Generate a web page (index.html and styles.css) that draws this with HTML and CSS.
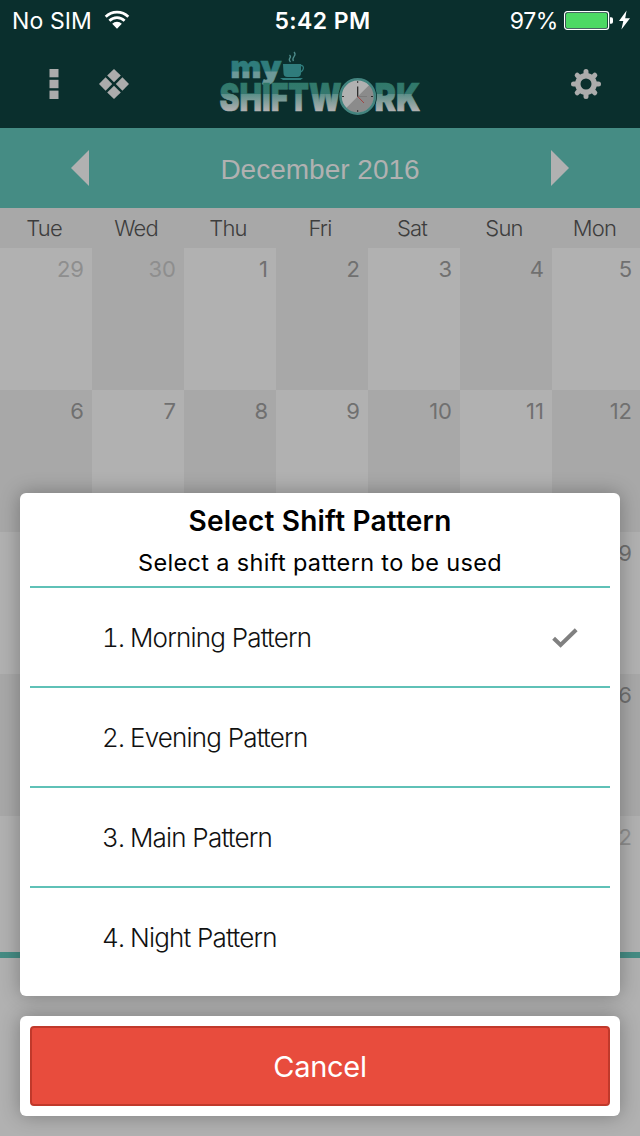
FILE: index.html
```html
<!DOCTYPE html>
<html lang="en">
<head>
  <meta charset="UTF-8">
  <meta name="viewport" content="width=device-width, initial-scale=1.0">
  <title>My Shiftwork</title>
  <link rel="stylesheet" href="styles.css">
</head>
<body>
  <div class="screen">
    <header class="header">
      <div class="status-bar">
        <div class="status-left">
          <span class="carrier">No SIM</span>
          <svg class="wifi" width="26" height="20" viewBox="0 0 26 20">
            <g fill="none" stroke="#fff" stroke-width="2.7">
              <path d="M1.7 6.8 A16 16 0 0 1 24.3 6.8"/>
              <path d="M5.4 10.8 A10.8 10.8 0 0 1 20.6 10.8"/>
            </g>
            <path d="M8.2 13.8 A6.8 6.8 0 0 1 17.8 13.8 L13 18.8 Z" fill="#fff"/>
          </svg>
        </div>
        <span class="time">5:42 PM</span>
        <div class="status-right">
          <span class="percent">97%</span>
          <svg width="67" height="20" viewBox="0 0 67 20">
            <rect x="0.6" y="1.6" width="44" height="17.8" rx="2.6" fill="none" stroke="#fff" stroke-width="1.2"/>
            <rect x="2" y="3" width="41.2" height="15" rx="1.6" fill="#4cd964"/>
            <path d="M46 7.3 h1.2 a1.8 1.8 0 0 1 1.8 1.8 v2.8 a1.8 1.8 0 0 1 -1.8 1.8 h-1.2 Z" fill="#fff"/>
            <path d="M62.6 0.6 L55 11 H59.3 L57.4 19.4 L66 8.3 H61.2 Z" fill="#fff"/>
          </svg>
        </div>
      </div>
      <div class="toolbar">
        <svg class="icon-dots" width="10" height="30" viewBox="0 0 10 30" fill="#acacac">
          <rect x="0.5" y="0" width="9" height="8.3"/>
          <rect x="0.5" y="10.8" width="9" height="8.4"/>
          <rect x="0.5" y="21.6" width="9" height="8.4"/>
        </svg>
        <svg class="icon-tiles" width="30" height="30" viewBox="0 0 30 30" fill="#acacac">
          <path d="M15 0 L21.8 6.6 L15 13.2 L8.2 6.6 Z"/>
          <path d="M6.6 8.2 L13.2 15 L6.6 21.8 L0 15 Z"/>
          <path d="M23.4 8.2 L30 15 L23.4 21.8 L16.8 15 Z"/>
          <path d="M15 16.8 L21.8 23.4 L15 30 L8.2 23.4 Z"/>
        </svg>
        <svg class="logo" width="210" height="68" viewBox="0 0 210 68" role="img" aria-label="my Shiftwork">
          <defs>
            <linearGradient id="word" gradientUnits="userSpaceOnUse" x1="0" y1="32" x2="0" y2="61">
              <stop offset="0" stop-color="#2f7969"/>
              <stop offset="0.4" stop-color="#35786f"/>
              <stop offset="0.42" stop-color="#5c8f89"/>
              <stop offset="1" stop-color="#b0b0b0"/>
            </linearGradient>
            <linearGradient id="my" gradientUnits="userSpaceOnUse" x1="0" y1="10" x2="0" y2="33">
              <stop offset="0" stop-color="#2f7c7c"/>
              <stop offset="0.48" stop-color="#2f7c7c"/>
              <stop offset="0.52" stop-color="#6c9998"/>
              <stop offset="1" stop-color="#6c9998"/>
            </linearGradient>
          </defs>
          <g class="logo-text">
            <text x="15.5" y="27.5" font-size="31" textLength="51" lengthAdjust="spacingAndGlyphs" fill="url(#my)" stroke="url(#my)">my</text>
            <text x="4.5" y="60.7" font-size="39" textLength="122" lengthAdjust="spacingAndGlyphs" fill="url(#word)" stroke="url(#word)">SHIFTW</text>
            <text x="159.5" y="60.7" font-size="39" textLength="46" lengthAdjust="spacingAndGlyphs" fill="url(#word)" stroke="url(#word)">RK</text>
          </g>
          <!-- coffee cup -->
          <g fill="#2f7c7c">
            <path d="M68 14 H86 V23 Q86 27 82 27 H72.5 Q68.5 27 68.5 23 Z"/>
            <path d="M65 28 H88 L85.5 30 H68 Z"/>
            <path d="M85.5 15.5 H87 Q89.6 17 87.5 20.5 L85 22.5" fill="none" stroke="#2f7c7c" stroke-width="1.3"/>
            <path d="M75.5 12 C71.5 8 78 8 74.5 5 M78.5 11 C75.5 7 83 6 79 2" fill="none" stroke="#4d8c8b" stroke-width="1.3"/>
          </g>
          <!-- clock in place of the O -->
          <circle cx="142.7" cy="46.5" r="18" fill="#b1b1b1" stroke="#0a2f2d" stroke-width="2.5"/>
          <path d="M154.7 34.5 A17 17 0 0 1 130.7 58.5 Z" fill="#8b8b8b"/>
          <circle cx="142.7" cy="46.5" r="17.2" fill="none" stroke="#43847f" stroke-width="2.6"/>
          <path d="M142.7 31 V33 M142.7 60 V62 M127 46.5 H129 M156 46.5 H158" stroke="#222" stroke-width="0.9"/>
          <path d="M142.7 47 V36.5" stroke="#222" stroke-width="1.2"/>
          <path d="M142.7 46.5 H152" stroke="#777" stroke-width="0.8"/>
          <path d="M142.7 46.5 L149 53" stroke="#a33c3c" stroke-width="0.9"/>
        </svg>
        <svg class="icon-gear" width="30" height="30" viewBox="-15 -15 30 30">
          <circle r="8.2" fill="none" stroke="#acacac" stroke-width="5.4"/>
          <g stroke="#acacac" stroke-width="5" stroke-linecap="round">
            <path d="M0 -9.5 V-12.5 M0 9.5 V12.5 M-9.5 0 H-12.5 M9.5 0 H12.5"/>
            <path d="M-6.8 -6.8 L-8.8 -8.8 M6.8 -6.8 L8.8 -8.8 M-6.8 6.8 L-8.8 8.8 M6.8 6.8 L8.8 8.8"/>
          </g>
        </svg>
      </div>
    </header>

    <div class="month-bar">
      <svg width="18" height="36" viewBox="0 0 18 36"><path d="M18 0 V36 L0 18 Z" fill="#b1b1b1"/></svg>
      <span class="month">December 2016</span>
      <svg width="18" height="36" viewBox="0 0 18 36"><path d="M0 0 V36 L18 18 Z" fill="#b1b1b1"/></svg>
    </div>

    <div class="weekdays">
      <span>Tue</span><span>Wed</span><span>Thu</span><span>Fri</span><span>Sat</span><span>Sun</span><span>Mon</span>
    </div>

    <div class="calendar">
      <div class="day other">29</div><div class="day other">30</div><div class="day">1</div><div class="day">2</div><div class="day">3</div><div class="day">4</div><div class="day">5</div>
      <div class="day">6</div><div class="day">7</div><div class="day">8</div><div class="day">9</div><div class="day">10</div><div class="day">11</div><div class="day">12</div>
      <div class="day"></div><div class="day"></div><div class="day"></div><div class="day"></div><div class="day"></div><div class="day"></div><div class="day">19</div>
      <div class="day"></div><div class="day"></div><div class="day"></div><div class="day"></div><div class="day"></div><div class="day"></div><div class="day">26</div>
      <div class="day"></div><div class="day"></div><div class="day"></div><div class="day"></div><div class="day"></div><div class="day"></div><div class="day other">2</div>
    </div>
  </div>

  <div class="action-sheet">
    <div class="panel">
      <div class="panel-head">
        <h1>Select Shift Pattern</h1>
        <p>Select a shift pattern to be used</p>
      </div>
      <ul class="patterns">
        <li>
          <span class="num">1.</span>
          <span>Morning Pattern</span>
          <svg class="check" width="26" height="20" viewBox="0 0 26 20"><path d="M1.6 10.2 L8.6 17 L24.2 1.8" fill="none" stroke="#808080" stroke-width="4"/></svg>
        </li>
        <li><span class="num">2.</span> <span>Evening Pattern</span></li>
        <li><span class="num">3.</span> <span>Main Pattern</span></li>
        <li><span class="num">4.</span> <span>Night Pattern</span></li>
      </ul>
    </div>
    <div class="panel cancel-panel">
      <button class="cancel">Cancel</button>
    </div>
  </div>
</body>
</html>
```
FILE: styles.css
```css
* {
  box-sizing: border-box;
}
body {
  font-family: Inter, 'Liberation Sans', sans-serif;
  margin: 0;
  height: 1136px;
  position: relative;
  overflow: hidden;
  background: #b1b1b1;
}
svg {
  display: block;
  flex: none;
}
.header {
  height: 128px;
  background: #0a2f2d;
}
.status-bar {
  height: 40px;
  padding: 0 9px 0 12px;
  display: grid;
  grid-template-columns: 1fr auto 1fr;
  align-items: center;
  color: #fff;
  font-size: 23px;
}
.status-bar span {
  padding-top: 2px;
}
.status-left, .status-right {
  display: flex;
  align-items: center;
}
.status-left {
  gap: 12px;
}
.status-right {
  justify-content: flex-end;
  gap: 6px;
}
.carrier {
  letter-spacing: 0.1px;
}
.percent {
  letter-spacing: -0.4px;
}
.time {
  font-weight: 600;
  letter-spacing: 0.4px;
  padding-left: 2px;
}
.toolbar {
  height: 88px;
  display: flex;
  align-items: center;
  padding: 0 39px 0 49px;
}
.icon-tiles {
  margin-left: 40px;
}
.logo {
  margin-left: 86px;
  align-self: flex-start;
  margin-top: 10px;
  overflow: visible;
}
.logo-text {
  font-family: Inter, sans-serif;
  font-weight: 900;
  stroke-width: 0.7;
}
.icon-gear {
  margin-left: auto;
}
.month-bar {
  height: 80px;
  padding: 0 71px;
  display: flex;
  align-items: center;
  justify-content: space-between;
  background: #458c84;
  color: #b1b1b1;
}
.month {
  font-family: 'Liberation Sans', sans-serif;
  font-size: 28px;
  padding-top: 3px;
}
.weekdays {
  display: grid;
  grid-template-columns: repeat(6, 92px) 88px;
  height: 40px;
  line-height: 41px;
  background: #a8a8a8;
  color: #3d3d3d;
  font-size: 22px;
  font-weight: 300;
  letter-spacing: -0.8px;
  text-align: center;
}
.weekdays span {
  padding-right: 4px;
}
.weekdays span:last-child {
  padding-right: 3px;
}
.calendar {
  display: grid;
  grid-template-columns: repeat(6, 92px) 88px;
  grid-template-rows: repeat(4, 142px) 136px;
  border-bottom: 6px solid #458c84;
}
.day {
  background: #a8a8a8;
  color: #707070;
  font-size: 22px;
  text-align: right;
  line-height: 26px;
  padding: 8px 8px 0 0;
}
.day:nth-child(odd) {
  background: #b1b1b1;
}
.day.other {
  color: #8e8e8e;
}
.action-sheet {
  position: absolute;
  left: 20px;
  right: 20px;
  bottom: 20px;
  display: flex;
  flex-direction: column;
  gap: 20px;
}
.panel {
  background: #fff;
  border-radius: 6px;
  padding: 0 10px;
  box-shadow: 0 0 20px rgba(0, 0, 0, 0.3);
}
.panel-head {
  height: 93px;
  text-align: center;
  color: #000;
}
h1 {
  margin: 0;
  padding-top: 11px;
  font-size: 28px;
  line-height: 34px;
  font-weight: 600;
  letter-spacing: 0.2px;
}
p {
  margin: 0;
  padding-top: 9px;
  font-size: 23.5px;
  line-height: 32px;
  letter-spacing: 0.33px;
}
.patterns {
  list-style: none;
  margin: 0;
  padding: 0 0 10px;
}
.patterns li {
  height: 100px;
  display: flex;
  align-items: center;
  padding: 0 32px 0 72px;
  border-top: 2px solid #5fc1b7;
  color: #111;
  font-size: 26px;
  font-weight: 300;
  letter-spacing: -0.8px;
}
.num {
  width: 28px;
  font-feature-settings: 'tnum';
}
.check {
  margin-left: auto;
  margin-top: 2px;
}
.cancel-panel {
  padding: 10px;
  height: 100px;
}
.cancel {
  width: 100%;
  height: 80px;
  border: 2px solid #c0392b;
  border-radius: 4px;
  background: #e84c3d;
  color: #fff;
  font-family: inherit;
  font-size: 29px;
  letter-spacing: -0.3px;
  padding-top: 1px;
}
```
